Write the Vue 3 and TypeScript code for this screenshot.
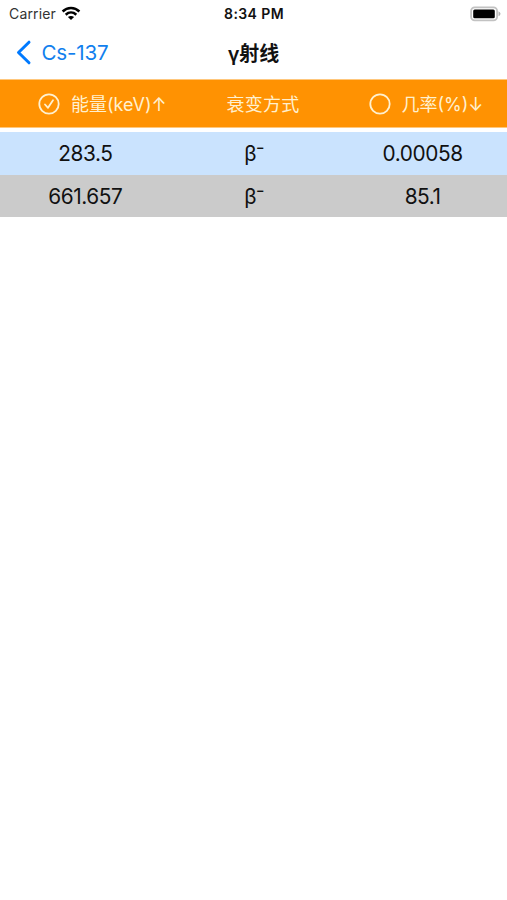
<script setup lang="ts">
interface GammaLine {
  energy: string
  probability: string
}

const lines: GammaLine[] = [
  { energy: '283.5', probability: '0.00058' },
  { energy: '661.657', probability: '85.1' },
]
</script>

<template>
  <main class="screen">
    <div class="status">
      <div class="carrier">
        <span class="carrier-name">Carrier</span>
        <svg class="wifi" width="20" height="15" viewBox="0 0 20 15" fill="none" stroke="#000" stroke-width="2.5">
          <path d="M1.6 5.5C6.4 .9 13.6 .9 18.4 5.5" />
          <path d="M4.7 8.7C7.8 5.9 12.2 5.9 15.3 8.7" />
          <path d="M10 14 6.9 11C8.7 9.5 11.3 9.5 13.1 11Z" fill="#000" stroke="none" />
        </svg>
      </div>
      <span class="time">8:34 PM</span>
      <svg class="battery" width="32" height="16" viewBox="0 0 32 16">
        <rect x="1.1" y="1.3" width="26" height="13" rx="3.6" fill="#fff" stroke="#c2c2c2" stroke-width="1.8" />
        <rect x="3.2" y="3.4" width="21.6" height="8.8" rx="1.5" fill="#000" />
        <path d="M28.5 5.3Q30.5 6.3 30.5 7.8T28.5 10.3Z" fill="#b2b2b2" />
      </svg>
    </div>
    <nav class="nav">
      <div class="back">
        <svg class="chevron" width="16" height="25" viewBox="0 0 16 25" fill="none" stroke="#007aff" stroke-width="3" stroke-linecap="round" stroke-linejoin="round">
          <path d="M13 2.2 2.5 12.5 13 22.8" />
        </svg>
        <span class="back-label">Cs-137</span>
      </div>
      <h1 class="title">γ射线</h1>
    </nav>
    <div class="row head">
      <div class="sort energy">
        <svg class="mark" width="22" height="22" viewBox="0 0 22 22" fill="none" stroke="#fff0cf" stroke-width="1.8" stroke-linecap="round" stroke-linejoin="round">
          <circle cx="11" cy="11" r="9.7" />
          <path d="M7 11.5 10 14.8 15 7.3" />
        </svg>
        <span class="head-label">能量(keV)↑</span>
      </div>
      <div class="mode head-label">衰变方式</div>
      <div class="sort rate">
        <svg class="mark" width="22" height="22" viewBox="0 0 22 22" fill="none" stroke="#fff0cf" stroke-width="1.8">
          <circle cx="11" cy="11" r="9.7" />
        </svg>
        <span class="head-label">几率(%)↓</span>
      </div>
    </div>
    <div v-for="line in lines" :key="line.energy" class="row data">
      <div>{{ line.energy }}</div>
      <div class="decay">β⁻</div>
      <div>{{ line.probability }}</div>
    </div>
  </main>
</template>

<style>
body {
  background: #fff;
}
</style>

<style scoped>
.screen {
  min-height: 900px;
  background: #fff;
  color: #111;
  font-family: Inter, "Noto Sans CJK SC", sans-serif;
}
.status {
  display: grid;
  grid-template-columns: 1fr auto 1fr;
  align-items: center;
  height: 27px;
  padding: 0 5px 0 9px;
  box-sizing: border-box;
}
.carrier {
  display: flex;
  align-items: center;
  gap: 5px;
}
.carrier-name {
  font-size: 14px;
  letter-spacing: 0.15px;
  color: #333;
}
.wifi {
  margin-top: -1px;
}
.time {
  margin-left: -3px;
  font-size: 14px;
  font-weight: 600;
  letter-spacing: 0.4px;
}
.battery {
  justify-self: end;
}
.nav {
  display: grid;
  grid-template-columns: 1fr auto 1fr;
  align-items: center;
  height: 52px;
  padding: 0 16px;
  box-sizing: border-box;
}
.back {
  display: flex;
  align-items: center;
  gap: 9.5px;
  color: #117fee;
}
.chevron {
  margin-top: -1px;
}
.back-label {
  padding-bottom: 2px;
  font-size: 20.6px;
  letter-spacing: -0.2px;
}
.title {
  margin: 1px 0 0;
  font-size: 20px;
  line-height: 28px;
  font-weight: 600;
}
.row {
  display: grid;
  grid-template-columns: repeat(3, 1fr);
  align-items: center;
  text-align: center;
  white-space: nowrap;
}
.head {
  height: 49px;
  margin-bottom: 4px;
  background: #ff9202;
  border-top: 1px solid #ffc77c;
  border-bottom: 1px solid #ffc77c;
  box-sizing: border-box;
  color: #fff0cf;
  font-size: 18px;
}
.head-label {
  padding-bottom: 2px;
}
.sort {
  display: flex;
  align-items: center;
  gap: 11px;
}
.energy {
  padding-left: 38px;
}
.mode {
  padding-left: 19px;
  letter-spacing: 0.3px;
}
.rate {
  padding-left: 30.5px;
}
.data {
  height: 42.5px;
  padding: 1px 0 0 1px;
  box-sizing: border-box;
  background: #cbcbcb;
  font-size: 20.8px;
  letter-spacing: -0.4px;
}
.decay {
  letter-spacing: -1px;
}
.head + .data {
  background: #cae3fe;
}
</style>
